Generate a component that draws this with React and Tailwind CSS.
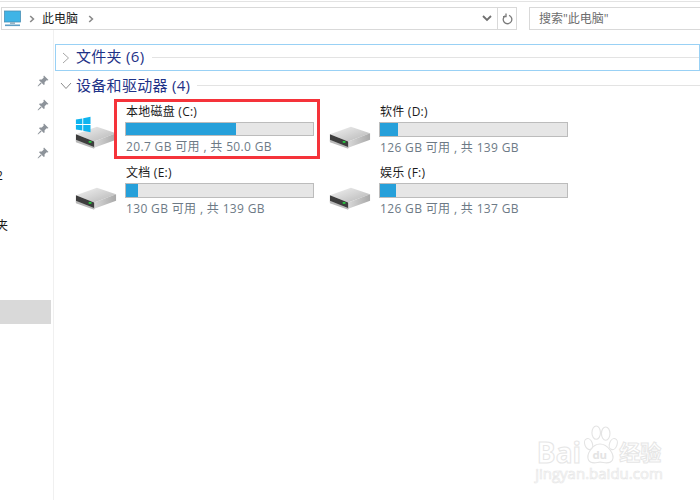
const font = { fontFamily: '"Open Sans","Noto Sans CJK SC",sans-serif' };

function Drive({ win }) {
  return (
    <svg width="42" height="39" viewBox="0 0 46 42" className="shrink-0">
      <defs>
        <linearGradient id="top" x1="0" y1="0" x2="1" y2="1">
          <stop offset="0" stopColor="#f2f2f2" />
          <stop offset="1" stopColor="#b5b5b5" />
        </linearGradient>
        <linearGradient id="side" x1="0" y1="0" x2="1" y2="0">
          <stop offset="0" stopColor="#d8d8d8" />
          <stop offset="1" stopColor="#a9a9a9" />
        </linearGradient>
      </defs>
      <path d="M1 25 L24 17 L45 24 L21 33 Z" fill="url(#top)" />
      <path d="M21 33 L45 24 L45 31 L21 40 Z" fill="url(#side)" />
      <path d="M1 25 L21 33 L21 40 L1 33 Z" fill="#3d3d3d" />
      <path d="M1 31 L21 39 L21 41 L1 34 Z" fill="#b9b9b9" />
      <rect x="15" y="32.5" width="3" height="2" fill="#27c93f" />
      {win && (
        <g fill="#0fb4ef">
          <path d="M1 9 L8 7.8 L8 14 L1 14 Z" />
          <path d="M9 7.6 L17 6 L17 14 L9 14 Z" />
          <path d="M1 15 L8 15 L8 21 L1 20 Z" />
          <path d="M9 15 L17 15 L17 23 L9 21.4 Z" />
        </g>
      )}
    </svg>
  );
}

function Tile({ name, pct, info, win, highlight }) {
  return (
    <div className="flex h-[61px] w-[254px] items-start">
      <div className="mt-[9px] ml-[20px] w-[51px] shrink-0">
        <Drive win={win} />
      </div>
      <div className={highlight
        ? "-mt-[3px] -ml-[12px] flex h-[60px] w-[206px] shrink-0 flex-col border-[3px] border-[#f5333a] pt-[1px] pl-[9px]"
        : "flex w-[189px] shrink-0 flex-col pt-[1px]"}>
        <div className="text-[12px] leading-[18px] tracking-[0.25px] text-[#1a1a1a]">{name}</div>
        <div className="mt-[1px] -ml-[1px] h-[15px] w-[189px] border border-[#bcbcbc] bg-[#e6e6e6]">
          <div className="h-full bg-[#26a0da]" style={{ width: `${pct}%` }} />
        </div>
        <div className="mt-[2px] text-[12px] leading-[18px] tracking-[0.35px] text-[#6d7a86]">{info}</div>
      </div>
    </div>
  );
}

function Pin() {
  return (
    <svg width="12" height="12" viewBox="0 0 12 12" fill="#8d939a">
      <path d="M7 0.5 L11.5 5 L10.4 5.6 L9.6 5.2 L7.6 7.2 L7.6 9.4 L6.8 10 L2 5.2 L2.7 4.5 L4.8 4.5 L6.8 2.4 L6.4 1.6 Z" />
      <path d="M3.6 7.4 L4.6 8.4 L1 11.5 L0.6 11 Z" />
    </svg>
  );
}

function Chevron() {
  return (
    <svg width="6" height="8" viewBox="0 0 6 8" fill="none" stroke="#8a8a8a" strokeWidth="1.6">
      <path d="M1.2 1 L4.4 4 L1.2 7" />
    </svg>
  );
}

function Watermark() {
  return (
    <div className="absolute top-[424px] left-[536px] flex w-[126px] flex-col items-center">
      <div className="flex items-end">
        <span className="text-[28px] leading-[28px] font-bold text-white [-webkit-text-stroke:1px_#e6e6e6]">Bai</span>
        <svg width="38" height="42" viewBox="0 0 40 44" fill="none" stroke="#e4e4e4" strokeWidth="1.2">
          <ellipse cx="8" cy="21" rx="4" ry="6" transform="rotate(-20 8 21)" />
          <ellipse cx="16" cy="9" rx="4.5" ry="7" />
          <ellipse cx="26" cy="10" rx="4.5" ry="7" />
          <ellipse cx="34" cy="21" rx="4" ry="6" transform="rotate(20 34 21)" />
          <path d="M20 21 C12 21 5 32 8 38 C11 43 17 40 20 40 C24 40 30 43 33 38 C36 32 28 21 20 21 Z" />
          <text x="12" y="37" fontSize="12" fontWeight="700" fill="#e4e4e4" stroke="none">du</text>
        </svg>
        <span className="text-[21px] leading-[28px] font-bold whitespace-nowrap text-white [-webkit-text-stroke:1px_#e6e6e6]">经验</span>
      </div>
      <div className="text-[15px] leading-[14px] whitespace-nowrap text-white [-webkit-text-stroke:0.7px_#e8e8e8]">jingyan.baidu.com</div>
    </div>
  );
}

export default function App() {
  return (
    <div style={font} className="relative flex h-[500px] w-[700px] flex-col overflow-hidden bg-white">
      <div className="mt-[1px] h-[1px] bg-[#e3e3e3]" />
      <div className="mt-[5px] flex h-[23px] items-stretch">
        <div className="ml-[1px] flex w-[496px] items-center border-y border-l border-[#d9d9d9]">
          <svg width="17" height="17" viewBox="0 0 17 17" className="ml-[2px]">
            <rect x="0.5" y="1" width="16" height="11" fill="#3fb4e6" stroke="#4a8fb5" strokeWidth="0.8" />
            <rect x="6" y="12" width="5" height="2" fill="#9ab6c6" />
            <rect x="1" y="14.5" width="15" height="1.6" fill="#5f9ec4" />
          </svg>
          <div className="ml-[8px] flex"><Chevron /></div>
          <span className="ml-[7px] text-[12px] text-[#1a1a1a]">此电脑</span>
          <div className="ml-[10px] flex"><Chevron /></div>
          <div className="mr-[5px] ml-auto flex">
            <svg width="10" height="7" viewBox="0 0 10 7" fill="none" stroke="#6f6f6f" strokeWidth="1.8"><path d="M1 1 L5 5 L9 1" /></svg>
          </div>
        </div>
        <div className="flex w-[20px] items-center justify-center border border-[#d9d9d9]">
          <svg width="11" height="12" viewBox="0 0 11 12" fill="none" stroke="#7a7a7a" strokeWidth="1.3">
            <path d="M3.2 2.8 A4.3 4.3 0 1 0 7 2.4" />
            <path d="M4 0.5 L4 3.6 L1 3.6" />
          </svg>
        </div>
        <div className="ml-[12px] flex flex-1 items-center border-y border-l border-[#d9d9d9] pl-[9px] text-[12px] text-[#6d6d6d]">搜索"此电脑"</div>
      </div>
      <div className="flex flex-1">
        <div className="relative w-[54px] border-r border-[#f0f0f0] pt-[45px]">
          <div className="flex flex-col items-end gap-[12px] pr-[4px]">
            <Pin /><Pin /><Pin /><Pin />
          </div>
          <div className="mt-[8px] -ml-[4px] text-[12px] leading-[18px] text-[#1a1a1a]">2</div>
          <div className="mt-[32px] -ml-[4px] text-[12px] leading-[18px] text-[#1a1a1a]">夹</div>
          <div className="mt-[65px] mr-[2px] h-[24px] bg-[#d9d9d9]" />
        </div>
        <div className="flex-1 pt-[14px] pl-[1px]">
          <div className="flex h-[27px] items-center border border-[#99d1f5] pl-[6px]">
            <svg width="8" height="12" viewBox="0 0 8 12" fill="none" stroke="#a6a6a6" strokeWidth="1"><path d="M1 1 L6.5 6 L1 11" /></svg>
            <span className="ml-[6px] -mt-[2px] text-[15px] tracking-[0.3px] text-[#1e3287]">文件夹 (6)</span>
            <div className="ml-[8px] h-[1px] flex-1 bg-[#e3e3e3]" />
          </div>
          <div className="flex h-[29px] items-center pl-[5px]">
            <svg width="12" height="8" viewBox="0 0 12 8" fill="none" stroke="#8a8a8a" strokeWidth="1"><path d="M1 1 L6 6.5 L11 1" /></svg>
            <span className="ml-[4px] text-[15px] tracking-[0.3px] text-[#1e3287]">设备和驱动器 (4)</span>
            <div className="ml-[7px] h-[1px] flex-1 bg-[#e3e3e3]" />
          </div>
          <div className="mt-[2px] grid w-[508px] grid-cols-2">
            <Tile win highlight name="本地磁盘 (C:)" pct={59} info="20.7 GB 可用 , 共 50.0 GB" />
            <Tile name="软件 (D:)" pct={9.5} info="126 GB 可用 , 共 139 GB" />
            <Tile name="文档 (E:)" pct={6.5} info="130 GB 可用 , 共 139 GB" />
            <Tile name="娱乐 (F:)" pct={8.5} info="126 GB 可用 , 共 137 GB" />
          </div>
        </div>
      </div>
      <Watermark />
    </div>
  );
}
